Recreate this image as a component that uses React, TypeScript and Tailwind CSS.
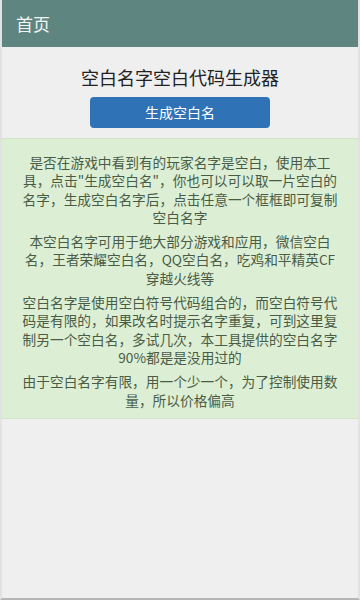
import React from "react"

const paragraphs = [
  "是否在游戏中看到有的玩家名字是空白，使用本工具，点击\"生成空白名\"，你也可以可以取一片空白的名字，生成空白名字后，点击任意一个框框即可复制空白名字",
  "本空白名字可用于绝大部分游戏和应用，微信空白名，王者荣耀空白名，QQ空白名，吃鸡和平精英CF穿越火线等",
  "空白名字是使用空白符号代码组合的，而空白符号代码是有限的，如果改名时提示名字重复，可到这里复制另一个空白名，多试几次，本工具提供的空白名字90%都是是没用过的",
  "由于空白名字有限，用一个少一个，为了控制使用数量，所以价格偏高",
]

export default function App() {
  return (
    <div
      className="w-[360px] h-[600px] bg-[#efefef] flex flex-col border-x-2 border-b-2 border-x-[#e2e2e2] border-b-[#b5b5b5]"
      style={{ fontFamily: '"Noto Sans CJK SC", "Noto Sans", sans-serif' }}
    >
      {/* header */}
      <div className="h-[47px] bg-[#5e8580] flex items-center px-[14px] shrink-0">
        <span className="text-[17px] text-[#f2f5f4]">首页</span>
      </div>

      {/* title + button */}
      <div className="flex flex-col items-center pt-[17px]">
        <h1 className="text-[18px] leading-[26px] text-[#222]">空白名字空白代码生成器</h1>
        <button className="mt-[7px] w-[180px] h-[31px] rounded-[4px] bg-[#2f72b5] text-white text-[14px] flex items-center justify-center">
          生成空白名
        </button>
      </div>

      {/* info panel */}
      <div className="mt-[10px] bg-[#dcefd5] border-y border-[#d0e6c8] px-[19px] pt-[14px] pb-[9px] flex flex-col gap-[6px]">
        {paragraphs.map((p, i) => (
          <p key={i} className="text-[13.7px] leading-[18.3px] text-[#4a5c45] text-center">
            {p}
          </p>
        ))}
      </div>
    </div>
  )
}
